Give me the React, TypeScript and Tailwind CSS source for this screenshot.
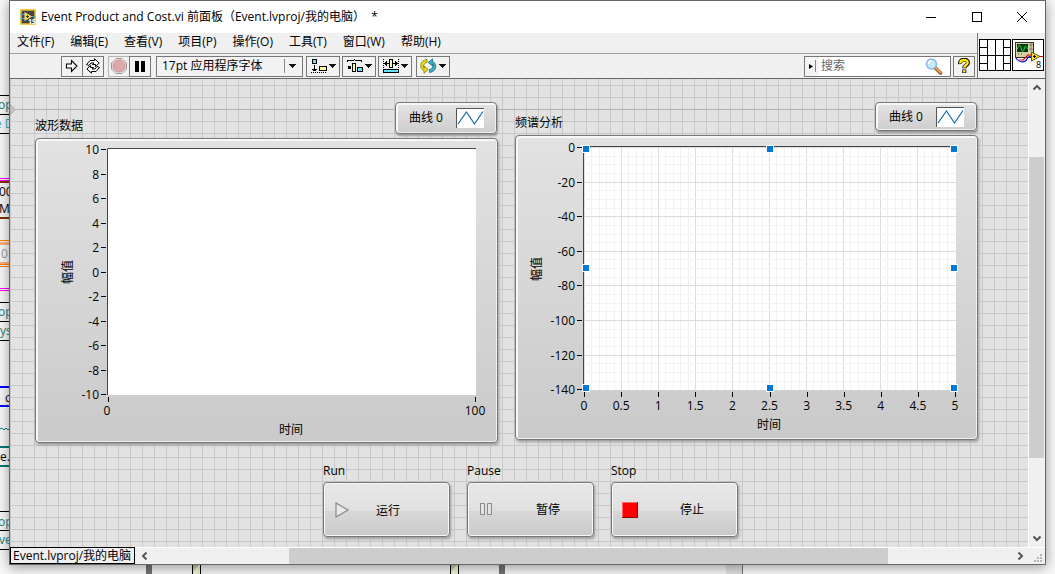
import React, { FC, ReactNode } from "react";

const menus = ["文件(F)", "编辑(E)", "查看(V)", "项目(P)", "操作(O)", "工具(T)", "窗口(W)", "帮助(H)"];

const wires: { y: number; h: number; color: string }[] = [
  { y: 95, h: 1, color: "#000" },
  { y: 114, h: 1, color: "#000" },
  { y: 133, h: 1, color: "#000" },
  { y: 178, h: 1, color: "#f0f" },
  { y: 180, h: 1, color: "#f0f" },
  { y: 181, h: 2, color: "#7f3000" },
  { y: 217, h: 2, color: "#7f3000" },
  { y: 240, h: 1, color: "#ff8000" },
  { y: 242, h: 3, color: "#ffb27a" },
  { y: 262, h: 2, color: "#ffb27a" },
  { y: 264, h: 1, color: "#ff8000" },
  { y: 266, h: 1, color: "#ff8000" },
  { y: 288, h: 1, color: "#f0f" },
  { y: 290, h: 1, color: "#f0f" },
  { y: 302, h: 1, color: "#000" },
  { y: 321, h: 1, color: "#000" },
  { y: 340, h: 1, color: "#000" },
  { y: 386, h: 2, color: "#00f" },
  { y: 405, h: 2, color: "#00f" },
  { y: 446, h: 2, color: "#007878" },
  { y: 465, h: 2, color: "#007878" },
  { y: 511, h: 1, color: "#000" },
  { y: 530, h: 1, color: "#000" },
  { y: 549, h: 1, color: "#000" },
];

const wireTexts: { x: number; y: number; text: string; color: string }[] = [
  { x: -2, y: 109, text: "op", color: "#178080" },
  { x: -5, y: 128, text: "e D", color: "#35b5c5" },
  { x: -1, y: 196, text: "00", color: "#000" },
  { x: -1, y: 213, text: "M", color: "#000" },
  { x: 1, y: 258, text: "0", color: "#999" },
  { x: -2, y: 316, text: "op", color: "#178080" },
  { x: 0, y: 335, text: "ys", color: "#178080" },
  { x: 5, y: 402, text: "c", color: "#000" },
  { x: 0, y: 461, text: "e.", color: "#000" },
  { x: -2, y: 526, text: "op", color: "#178080" },
  { x: -1, y: 544, text: "ve", color: "#178080" },
];

// Block diagram window, mostly hidden by the front panel
const BlockDiagram: FC = () => (
  <svg className="absolute inset-0 h-full w-full text-xs" aria-hidden="true">
    <rect width="100%" height="100%" fill="#f8f8f8" />
    {wires.map((w) => (
      <rect key={w.y} x="0" y={w.y} width="10" height={w.h} fill={w.color} />
    ))}
    {wireTexts.map((t) => (
      <text key={t.y} x={t.x} y={t.y} fill={t.color}>{t.text}</text>
    ))}
    <path d="M0 429l2-1 2 2 2-2 2 2 2-2" fill="none" stroke="#007878" />
    <rect x="152" y="564" width="590" height="10" fill="#f2f2f2" />
    <rect x="726" y="564" width="16" height="10" fill="#dedede" />
    <path d="M742.5 564v10" stroke="#777" />
    <rect x="146" y="564" width="6" height="10" fill="#727272" />
    <rect x="499" y="564" width="6" height="10" fill="#727272" />
    {[192, 450].map((x) => (
      <g key={x}>
        <rect x={x} y="564" width="9" height="10" fill="#f0f0d4" />
        <path d={`M${x} 564h8l-8 8z`} fill="#c4c4a8" />
        <path d={`M${x + 0.5} 564v10M${x + 8.5} 564v10`} stroke="#000" />
      </g>
    ))}
  </svg>
);

const ToolButton: FC<{ label: string; children: ReactNode; className?: string }> = ({ label, children, className = "w-[22px]" }) => (
  <button
    type="button"
    aria-label={label}
    className={`flex h-[21px] shrink-0 items-center justify-center border border-[#777] bg-[#f2f2f2] ${className}`}
  >
    {children}
  </button>
);

const Caret: FC = () => (
  <svg width="7" height="4" viewBox="0 0 7 4" shapeRendering="crispEdges">
    <path d="M0 0h7L3.5 4z" fill="#111" />
  </svg>
);

const Toolbar: FC = () => (
  <div className="flex h-6 items-center pl-[51px]">
    <ToolButton label="运行">
      <svg width="14" height="14" viewBox="0 0 14 14">
        <path d="M1.500 5h5V1.500L12 7l-5.500 5.500V9h-5z" fill="#fff" stroke="#000" strokeWidth="1.100" />
      </svg>
    </ToolButton>
    <ToolButton label="连续运行" className="-ml-px w-[22px]">
      <svg width="16" height="16" viewBox="0 0 16 16" fill="#fff" stroke="#000" strokeWidth="1">
        <path d="M1.500 6.500L5 2.500h4.500V.8l4.700 4.200-3.700 3.500V6.500H7.500L9 5H6L4 7.500z" />
        <path d="M14.500 9.500L11 13.500H6.500v1.700L1.800 11l3.700-3.500v2h3L7 11h3l2-2.500z" />
      </svg>
    </ToolButton>
    <ToolButton label="中止执行" className="ml-1 w-[22px] border-[#b4b4b4]">
      <svg width="16" height="16" viewBox="0 0 16 16">
        <path d="M5 .5h6L15.500 5v6L11 15.500H5L.5 11V5z" fill="#fff" stroke="#999" />
        <path d="M5.500 2h5L14 5.500v5L10.500 14h-5L2 10.500v-5z" fill="#dfa8a8" stroke="#c69494" />
      </svg>
    </ToolButton>
    <ToolButton label="暂停" className="-ml-px w-[22px]">
      <svg width="10" height="11"><path d="M0 0h4v11H0zM6 0h4v11H6z" /></svg>
    </ToolButton>
    <div className="relative ml-[5px] h-[21px] w-[147px] shrink-0 border border-[#777] bg-[#f2f2f2]">
      <select aria-label="字体" className="h-full w-full appearance-none bg-transparent pl-[5px] text-xs outline-none">
        <option>17pt 应用程序字体</option>
      </select>
      <div className="pointer-events-none absolute inset-y-0 right-0 flex w-[18px] items-center">
        <span className="mr-1 h-[14px] w-px bg-[#888]" />
        <Caret />
      </div>
    </div>
    <ToolButton label="对齐对象" className="ml-[3px] w-[34px] gap-px">
      <svg width="17" height="15" viewBox="0 0 17 15" shapeRendering="crispEdges">
        <path d="M1.500.5h4v4h-4z" fill="#67dfff" stroke="#000" />
        <path d="M3.500 6v6M1 10.500h5M2 11.500h3" stroke="#000" />
        <path d="M0 13.500h16" stroke="#000" strokeDasharray="1 1" />
        <path d="M8.500 7.500h7v4h-7z" fill="#ffffa0" stroke="#000" />
      </svg>
      <Caret />
    </ToolButton>
    <ToolButton label="分布对象" className="ml-[2px] w-[34px] gap-px">
      <svg width="17" height="15" viewBox="0 0 17 15" shapeRendering="crispEdges">
        <path d="M.5 3V1.500h6l1-1 1 1h6V3" fill="none" stroke="#000" />
        <path d="M1 7h3v3H1z" />
        <path d="M5.500 4.500h3v8h-3z" fill="#ffffa0" stroke="#000" />
        <path d="M10.500 8.500h5v4h-5z" fill="#67dfff" stroke="#000" />
      </svg>
      <Caret />
    </ToolButton>
    <ToolButton label="调整对象大小" className="ml-[2px] w-[34px] gap-px">
      <svg width="17" height="15" viewBox="0 0 17 15" shapeRendering="crispEdges">
        <path d="M.5 0v10M15.500 0v10" stroke="#000" strokeDasharray="1 1" />
        <path d="M1 4.500h14M3.500 2v5M12.500 2v5M2.500 3v3M13.500 3v3" stroke="#000" />
        <path d="M6.500.5h3v8h-3z" fill="#ffffa0" stroke="#000" />
        <path d="M.5 10.500h15v3H.5z" fill="#67dfff" stroke="#000" />
      </svg>
      <Caret />
    </ToolButton>
    <ToolButton label="重新排序" className="ml-1 w-[34px] gap-[2px]">
      <svg width="17" height="16" viewBox="0 0 17 16" strokeWidth=".8">
        <path d="M7 1.500C3 2 .8 4.500.8 7.500c0 2.300 1.200 4.300 3.200 5.300v2.400L8.200 11.500 4 8v2.200C2.800 8 4 5 7 4.500z" fill="#e4dc18" stroke="#77720a" />
        <path d="M9.500 14.500c4-.5 6.200-3 6.200-6 0-2.300-1.200-4.300-3.200-5.300V.8L8.300 4.500l4.200 3.500V5.800c1.200 2.200 0 5.200-3 5.700z" fill="#36afc4" stroke="#176a7b" />
      </svg>
      <Caret />
    </ToolButton>
    <label className="ml-auto flex h-[21px] w-[147px] items-center border border-[#777] bg-white">
      <span className="flex h-full w-[14px] items-center gap-[2px] bg-[#f4f4f4] pl-1">
        <svg width="4" height="5"><path d="M0 0l4 2.500L0 5z" /></svg>
        <span className="h-3 w-px bg-[#888]" />
      </span>
      <input aria-label="搜索" placeholder="搜索" className="w-0 grow bg-transparent pl-[2px] text-xs outline-none placeholder:text-[#666]" />
      <svg className="mr-[7px]" width="18" height="17" viewBox="0 0 18 17">
        <path d="M10.500 10l5 5" stroke="#8b5a32" strokeWidth="3.600" strokeLinecap="round" />
        <path d="M11 10l4.500 4.500" stroke="#ee9d4d" strokeWidth="2" strokeLinecap="round" />
        <circle cx="6.500" cy="6" r="5" fill="#c2ebfd" stroke="#8fb4dc" strokeWidth="1.500" />
        <path d="M3.500 6c0-2 1.500-3 3-3" stroke="#fff" strokeWidth="1.500" fill="none" />
      </svg>
    </label>
    <ToolButton label="帮助" className="mr-[2px] ml-[2px] w-[22px]">
      <svg width="12" height="16" viewBox="0 0 12 16">
        <path d="M2 6C1.500.5 10 .5 10 4.500c0 2.700-3.700 2.700-3.700 5.700M6.300 11.500v3.500" fill="none" stroke="#000" strokeWidth="4" />
        <path d="M2.200 5.500C2 1 9.700 1 9.700 4.500c0 2.500-3.400 2.500-3.400 5.200M6.300 12v2.500" fill="none" stroke="#ffed00" strokeWidth="2.400" />
      </svg>
    </ToolButton>
  </div>
);

const TitleBar: FC = () => (
  <div className="flex h-8 shrink-0 items-center bg-white pl-[10px]">
    <svg width="16" height="16" viewBox="0 0 16 16">
      <path d="M1 1h14v14H1z" fill="#41464b" stroke="#f1ba15" strokeWidth="1.500" />
      <path d="M0 5.500h5M0 9.500h5M11 7.500h5" stroke="#4aa6d8" strokeWidth="1.200" />
      <path d="M4.500 3l7.500 4.500L4.500 12z" fill="#ffd95e" />
      <path d="M6 7.500h3M7.500 6v3" stroke="#333" />
      <text x="8" y="15" className="text-[7px] font-bold" fill="#fff">15</text>
    </svg>
    <h1 className="ml-[5px] text-xs whitespace-pre">Event Product and Cost.vi 前面板（Event.lvproj/我的电脑）  *</h1>
    <div className="ml-auto flex">
      <button type="button" aria-label="最小化" className="flex h-[30px] w-[46px] items-center justify-center">
        <svg width="10" height="10"><path d="M0 5.500h10" stroke="#000" /></svg>
      </button>
      <button type="button" aria-label="最大化" className="flex h-[30px] w-[45px] items-center justify-center">
        <svg width="10" height="10" shapeRendering="crispEdges"><path d="M.5.5h9v9h-9z" fill="none" stroke="#000" /></svg>
      </button>
      <button type="button" aria-label="关闭" className="flex h-[30px] w-[46px] items-center justify-center">
        <svg width="10" height="10"><path d="M0 0l10 10M10 0L0 10" stroke="#000" /></svg>
      </button>
    </div>
  </div>
);

// Connector pane and VI icon
const IconPane: FC = () => (
  <div className="flex gap-px border-l border-[#777] pt-[6px] pr-px pl-px">
    <svg width="32" height="32" viewBox="0 0 32 32" fill="none" stroke="#000" shapeRendering="crispEdges">
      <rect x=".5" y=".5" width="31" height="31" fill="#fff" />
      <path d="M8.500 0v32M16.500 0v32M24.500 0v32M0 16.500h32M0 8.500h8M0 24.500h8M24 8.500h8M24 24.500h8" />
    </svg>
    <svg width="32" height="32" viewBox="0 0 32 32">
      <rect x=".5" y=".5" width="31" height="31" fill="#fff" stroke="#000" />
      <rect x="3.500" y="3.500" width="18" height="15" fill="#d4d0a4" stroke="#333" />
      <rect x="5" y="5" width="11" height="8" fill="#023a12" />
      <path d="M5.500 10c1-5 3-5 4 0s2.500 1 3-1 1.500-3 3 1" fill="none" stroke="#39e04c" />
      <path d="M18 5h2v2h-2zM18 9h2v2h-2z" fill="none" stroke="#666" strokeWidth=".7" />
      <path d="M6 15h1M9 15h1" stroke="#444" />
      <path d="M4 19c3 5 9 5 11 1s3-2 5-2" fill="none" stroke="#0018c8" strokeWidth="1.200" />
      <path d="M7 21h4l5-5h4M27 17.500h4" fill="none" stroke="#e00000" strokeWidth="1.200" />
      <path d="M19.500 13l8.500 4.500-8.500 4.500z" fill="#ffe900" stroke="#555" />
      <path d="M21 17.500h3M22.500 16v3" stroke="#000" />
      <text x="24" y="29" className="text-[9px]">8</text>
    </svg>
  </div>
);

const Legend: FC<{ height: string }> = ({ height }) => (
  <div className={`flex w-[102px] items-center justify-between rounded border border-[#777] bg-linear-to-b from-[#e4e4e4] to-[#cecece] pr-3 pl-[13px] text-xs shadow-[inset_1px_1px_0_1px_#f8f8f8,inset_-1px_-1px_0_#f0f0f0,1px_2px_2px_#999] ${height}`}>
    <span>曲线 0</span>
    <svg width="28" height="20" viewBox="0 0 28 20">
      <path d="M0 0h28v20H0z" fill="#fff" />
      <path d="M.5 20V.5H28" fill="none" stroke="#555" />
      <path d="M2 16l8.500-12 8 12L27 3.500" fill="none" stroke="#1467a8" strokeWidth="1.200" />
    </svg>
  </div>
);

const yLeft = [10, 8, 6, 4, 2, 0, -2, -4, -6, -8, -10];
const yRight = [0, -20, -40, -60, -80, -100, -120, -140];
const xRight = [0, 0.5, 1, 1.5, 2, 2.5, 3, 3.5, 4, 4.5, 5];

const WaveformPlot: FC = () => (
  <svg className="block text-xs" width="460" height="303" viewBox="36 139 460 303">
    <rect x="107" y="148" width="369" height="247" fill="#fff" />
    <path d="M107.500 395V148.500H476" fill="none" stroke="#444" />
    {yLeft.map((v, i) => (
      <g key={v}>
        <path d={`M101 ${Math.round(149 + i * 24.5) + 0.5}h5`} stroke="#000" />
        <text x="99" y={154 + i * 24.5} textAnchor="end">{v}</text>
      </g>
    ))}
    <path d="M108.500 397v5M475.500 397v5" stroke="#000" />
    <text x="107" y="415" textAnchor="middle">0</text>
    <text x="475" y="415" textAnchor="middle">100</text>
    <text x="291" y="434" textAnchor="middle">时间</text>
    <text transform="translate(72 272) rotate(-90)" textAnchor="middle">幅值</text>
  </svg>
);

const SpectrumPlot: FC = () => (
  <svg className="block text-xs" width="460" height="303" viewBox="516 136 460 303">
    <rect x="583" y="146" width="373" height="244" fill="#fff" />
    <g shapeRendering="crispEdges">
      {Array.from({ length: 50 }, (_, i) => (
        <path key={i} d={`M${Math.round(584 + i * 7.4) + 0.5} 147v243`} stroke={i % 5 ? "#f2f2f2" : "#dcdcdc"} />
      ))}
      {Array.from({ length: 28 }, (_, i) => (
        <path key={i} d={`M584 ${Math.round(147 + i * 8.65) + 0.5}h372`} stroke={i % 4 ? "#f2f2f2" : "#dcdcdc"} />
      ))}
    </g>
    <path d="M583.500 390V146.500H956" fill="none" stroke="#444" />
    {yRight.map((v, i) => (
      <g key={v}>
        <path d={`M577 ${Math.round(147 + i * 34.6) + 0.5}h5`} stroke="#000" />
        <text x="575" y={152 + i * 34.6} textAnchor="end">{v}</text>
      </g>
    ))}
    {xRight.map((v, i) => (
      <g key={v}>
        <path d={`M${Math.round(584 + i * 37.1) + 0.5} 392v5`} stroke="#000" />
        <text x={584 + i * 37.1} y="410" textAnchor="middle">{v}</text>
      </g>
    ))}
    <text x="769" y="429" textAnchor="middle">时间</text>
    <text transform="translate(541 269) rotate(-90)" textAnchor="middle">幅值</text>
    {[[586, 149], [770, 149], [954, 149], [586, 268], [954, 268], [586, 388], [770, 388], [954, 388]].map(([x, y]) => (
      <rect key={`${x}-${y}`} x={x - 3.5} y={y - 3.5} width="7" height="7" fill="#0078d7" stroke="#fff" />
    ))}
  </svg>
);

const Graph: FC<{ title: string; legendHeight: string; children: ReactNode }> = ({ title, legendHeight, children }) => (
  <section className="w-[463px] shrink-0">
    <div className="mb-1 flex items-end justify-between pr-px">
      <h2 className="text-xs leading-4">{title}</h2>
      <Legend height={legendHeight} />
    </div>
    <div className="rounded border border-[#777] bg-linear-to-b from-[#e2e2e2] to-[#cacaca] shadow-[inset_1px_1px_0_1px_#f8f8f8,inset_-1px_-1px_0_#f0f0f0,1px_2px_3px_#999]">
      {children}
    </div>
  </section>
);

const Command: FC<{ id: string; label: string; text: string; pad: string; icon: ReactNode }> = ({ id, label, text, pad, icon }) => (
  <div className="flex flex-col gap-[2px]">
    <label htmlFor={id} className="text-xs leading-[18px]">{label}</label>
    <button
      id={id}
      type="button"
      className={`flex h-[55px] w-[127px] items-center rounded border border-[#777] bg-[linear-gradient(#e8e8e8,#e0e0e0_52%,#d8d8d8_52%,#cacaca)] pl-[10px] text-xs shadow-[inset_0_0_0_1px_#f8f8f8,1px_2px_3px_#999] ${pad}`}
    >
      {icon}
      <span>{text}</span>
    </button>
  </div>
);

const Arrow: FC<{ label: string; d: string; className: string }> = ({ label, d, className }) => (
  <button type="button" aria-label={label} className={`flex shrink-0 items-center justify-center ${className}`}>
    <svg width="8" height="8" viewBox="0 0 8 8"><path d={d} fill="none" stroke="#555" strokeWidth="2" /></svg>
  </button>
);

const App: FC = () => {
  return (
    <div className="relative h-screen overflow-hidden pr-[9px] pb-[9px] pl-[9px] font-['Open_Sans','Noto_Sans_CJK_SC',sans-serif] text-xs text-black">
      <BlockDiagram />
      <main className="relative flex h-full flex-col border border-[#666] bg-[#f0f0f0] shadow-[0_2px_12px_rgba(0,0,0,0.4)]">
        <TitleBar />
        <div className="flex h-[46px] shrink-0 border-b border-[#666]">
          <div className="min-w-0 grow">
            <nav className="flex h-[21px] gap-4 border-b border-[#a0a0a0] pb-[3px] pl-[7px] leading-4">
              {menus.map((m) => (
                <button key={m} type="button" className="whitespace-nowrap">{m}</button>
              ))}
            </nav>
            <Toolbar />
          </div>
          <IconPane />
        </div>

        <div className="flex min-h-0 grow">
          {/* Front panel */}
          <div className="relative min-w-0 grow overflow-hidden border-r border-white bg-[#e2e2e2] bg-[linear-gradient(to_right,transparent_11px,#c8c8c8_11px),linear-gradient(to_bottom,transparent_11px,#c8c8c8_11px)] bg-size-[12px_12px] bg-position-[1px_7px] pt-[23px] pl-[25px]">
            {/* Origin marker */}
            <svg className="absolute top-[25px] left-0 h-[11px] w-full">
              <path d="M0 0l5 5.500L0 11z" fill="#c4c4c4" stroke="#aaa" />
              <rect x="5" y="5" width="100%" height="1" fill="#b0b0b0" />
            </svg>
            <div className="relative flex items-start gap-[17px]">
              <Graph title="波形数据" legendHeight="h-8"><WaveformPlot /></Graph>
              <Graph title="频谱分析" legendHeight="h-[29px]"><SpectrumPlot /></Graph>
            </div>
            <div className="mt-[19px] flex gap-[17px] pl-72">
              <Command
                id="run"
                label="Run"
                text="运行"
                pad="gap-[26px] pt-[2px]"
                icon={<svg width="16" height="18" viewBox="0 0 16 18"><path d="M2 1l12 7-12 7z" fill="#e9e9e9" stroke="#888" strokeWidth="1.200" /></svg>}
              />
              <Command
                id="pause"
                label="Pause"
                text="暂停"
                pad="gap-[42px]"
                icon={<svg width="16" height="18" viewBox="0 0 16 18"><path d="M2.500 2.500h4v11h-4zM9.500 2.500h4v11h-4z" fill="#e4e4e4" stroke="#888" /></svg>}
              />
              <Command
                id="stop"
                label="Stop"
                text="停止"
                pad="gap-[42px]"
                icon={<svg width="16" height="16" viewBox="0 0 16 16"><path d="M0 0h16v16H0z" fill="#f00" /><path d="M.5 16V.5H16" fill="none" stroke="#ff6666" /><path d="M0 15.500h15.500V0" fill="none" stroke="#900" /></svg>}
              />
            </div>
          </div>
          <div className="flex w-4 shrink-0 flex-col">
            <Arrow label="向上滚动" d="M.5 5.500L4 2l3.500 3.500" className="h-[18px]" />
            <div className="flex grow flex-col pt-[60px] pr-px pb-[71px]">
              <div className="grow bg-[#cdcdcd]" />
            </div>
            <Arrow label="向下滚动" d="M.5 2.500L4 6l3.500-3.500" className="h-[18px]" />
          </div>
        </div>

        <div className="flex h-[17px] shrink-0">
          <div className="border border-black bg-[#f0f0f0] pr-[3px] pl-[2px] leading-[15px] whitespace-nowrap">Event.lvproj/我的电脑</div>
          <div className="flex grow border-t border-white">
            <Arrow label="向左滚动" d="M5.500.5L2 4l3.500 3.500" className="w-[19px]" />
            <div className="flex grow pr-[123px] pl-[135px]">
              <div className="grow bg-[#cdcdcd]" />
            </div>
            <Arrow label="向右滚动" d="M2.500.5L6 4 2.500 7.500" className="w-[17px]" />
            <svg className="ml-[6px]" width="11" height="16" viewBox="0 0 11 16">
              <path d="M6 6h2v2H6zM3 9h2v2H3zM6 9h2v2H6zM0 12h2v2H0zM3 12h2v2H3zM6 12h2v2H6z" fill="#b8b8b8" />
            </svg>
          </div>
        </div>
      </main>
    </div>
  );
};

export default App;
